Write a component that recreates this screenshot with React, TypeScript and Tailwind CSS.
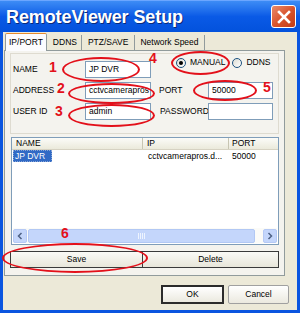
import React from 'react';

const font = { fontFamily: '"Liberation Sans", Arial, sans-serif' };

const Field: React.FC<{ value?: string; w: string }> = ({ value = '', w }) => (
  <div className={`${w} h-[17px] bg-white border border-[#7f9db9] flex items-center pl-[3px] text-[8.5px] text-black overflow-hidden whitespace-nowrap`}>
    {value}
  </div>
);

const Radio: React.FC<{ checked?: boolean; label: string }> = ({ checked, label }) => (
  <div className="flex items-center gap-[4px]">
    <div className="w-[10px] h-[10px] rounded-full border border-[#1c5180] bg-gradient-to-br from-[#dcdcd4] to-white flex items-center justify-center shrink-0">
      {checked && <div className="w-[4px] h-[4px] rounded-full bg-black" />}
    </div>
    <span className="text-[8.5px] text-black whitespace-nowrap">{label}</span>
  </div>
);

const Oval: React.FC<{ className: string }> = ({ className }) => (
  <div className={`absolute rounded-[50%] border-2 border-[#e3101a] pointer-events-none ${className}`} />
);

const Num: React.FC<{ n: string; className: string }> = ({ n, className }) => (
  <span className={`absolute text-[14px] font-bold text-[#e3101a] leading-none ${className}`}>{n}</span>
);

export default function App() {
  return (
    <div className="relative w-[300px] h-[313px] bg-[#0a55e0] flex flex-col overflow-hidden" style={font}>
      {/* title bar */}
      <div className="h-[32px] shrink-0 flex items-start justify-between bg-gradient-to-b from-[#3d8cf5] via-[#0a5ae6] to-[#0352dc] border-t border-[#6ba6ff]">
        <span className="ml-[6px] mt-[7px] text-[18px] font-bold text-white leading-none tracking-[-0.1px]" style={{ textShadow: '1px 1px 0 #0a2a7a' }}>
          RemoteViewer Setup
        </span>
        <div className="mt-[4px] mr-[4px] w-[25px] h-[23px] rounded-[3px] border border-white bg-gradient-to-br from-[#e88a6a] via-[#d9542d] to-[#c23b16] flex items-center justify-center">
          <svg width="14" height="14" viewBox="0 0 14 14">
            <path d="M2 2 L12 12 M12 2 L2 12" stroke="white" strokeWidth="2.6" strokeLinecap="square" />
          </svg>
        </div>
      </div>

      {/* body */}
      <div className="flex-1 mx-[3px] mb-[3px] bg-[#ece9d8] flex flex-col">
        {/* tabs */}
        <div className="h-[18px] flex items-end pl-[2px] text-[8.5px] text-black">
          <div className="h-[18px] px-[3px] flex items-center bg-[#fcfcfe] border border-b-0 border-[#919b9c] border-t-[#e68b2c] rounded-t-[2px] -mb-px z-10">
            IP/PORT
          </div>
          <div className="h-[15px] px-[4px] flex items-center border-r border-[#919b9c] ml-[2px]">DDNS</div>
          <div className="h-[15px] px-[6px] flex items-center border-r border-[#919b9c]">PTZ/SAVE</div>
          <div className="h-[15px] px-[5px] flex items-center border-r border-[#919b9c]">Network Speed</div>
        </div>

        {/* tab panel */}
        <div className="ml-[1px] w-[281px] h-[226px] border border-[#919b9c] bg-[#f4f3ee] flex flex-col px-[5px] pt-[2px]">
          {/* form area */}
          <div className="h-[81px] border border-[#dedbd0] flex flex-col pt-[7px] pl-[2px] gap-[4px]">
            <div className="flex items-center h-[17px]">
              <span className="w-[72px] text-[8.5px] text-black">NAME</span>
              <Field value="JP DVR" w="w-[66px]" />
              <div className="ml-[25px] -mt-[14px] flex items-center gap-[7px]">
                <Radio checked label="MANUAL" />
                <Radio label="DDNS" />
              </div>
            </div>
            <div className="flex items-center h-[17px]">
              <span className="w-[72px] text-[8.5px] text-black whitespace-nowrap">ADDRESS</span>
              <Field value="cctvcamerapros" w="w-[66px]" />
              <span className="ml-[8px] w-[49px] text-[8.5px] text-black">PORT</span>
              <Field value="50000" w="w-[65px]" />
            </div>
            <div className="flex items-center h-[17px]">
              <span className="w-[72px] text-[8.5px] text-black">USER ID</span>
              <Field value="admin" w="w-[66px]" />
              <span className="ml-[9px] w-[48px] text-[8.5px] text-black whitespace-nowrap">PASSWORD</span>
              <Field w="w-[65px]" />
            </div>
          </div>

          {/* list view */}
          <div className="mt-[3px] ml-[1px] w-[268px] h-[108px] border border-[#7f9db9] bg-white flex flex-col text-[8.5px] text-black">
            <div className="h-[12px] flex bg-gradient-to-b from-[#fbfbf8] to-[#ebeadb] border-b border-[#d6d2c2]">
              <div className="w-[131px] pl-[4px] border-r border-[#c7c5b2] flex items-center">NAME</div>
              <div className="w-[86px] pl-[4px] border-r border-[#c7c5b2] flex items-center">IP</div>
              <div className="flex-1 pl-[3px] flex items-center">PORT</div>
            </div>
            <div className="h-[10px] mt-[1px] flex items-center">
              <div className="w-[131px] pl-[1px]">
                <span className="bg-[#316ac5] text-white px-[1px] pr-[6px] border border-dotted border-[#8aa6d6]">JP DVR</span>
              </div>
              <div className="w-[86px] pl-[5px]">cctvcamerapros.d...</div>
              <div className="flex-1 pl-[3px]">50000</div>
            </div>
            <div className="flex-1" />
            {/* scrollbar */}
            <div className="h-[15px] mx-[1px] mb-[1px] flex items-center bg-[#fbfbf8] gap-px">
              <div className="w-[14px] h-[14px] rounded-[2px] bg-[#c4d6fb] border border-[#b5c9f5] flex items-center justify-center">
                <svg width="6" height="8" viewBox="0 0 6 8"><path d="M4.5 1 L1.5 4 L4.5 7" stroke="#4d6185" strokeWidth="1.5" fill="none" /></svg>
              </div>
              <div className="w-[227px] h-[14px] rounded-[2px] bg-[#c4d6fb] border border-[#b2c8f4] flex items-center justify-center">
                <div className="flex gap-px">
                  <div className="w-px h-[6px] bg-[#eef4fe]" />
                  <div className="w-px h-[6px] bg-[#eef4fe]" />
                  <div className="w-px h-[6px] bg-[#eef4fe]" />
                  <div className="w-px h-[6px] bg-[#eef4fe]" />
                </div>
              </div>
              <div className="flex-1" />
              <div className="w-[14px] h-[14px] rounded-[2px] bg-[#c4d6fb] border border-[#b5c9f5] flex items-center justify-center">
                <svg width="6" height="8" viewBox="0 0 6 8"><path d="M1.5 1 L4.5 4 L1.5 7" stroke="#4d6185" strokeWidth="1.5" fill="none" /></svg>
              </div>
            </div>
          </div>

          {/* save / delete */}
          <div className="mt-[6px] flex text-[8.5px] text-black">
            <button className="w-[133px] h-[17px] border border-[#3a3a3a] bg-gradient-to-b from-[#fafaf6] to-[#e8e6da]">Save</button>
            <button className="w-[136px] h-[17px] border border-l-0 border-[#3a3a3a] bg-gradient-to-b from-[#fafaf6] to-[#e8e6da]">Delete</button>
          </div>
        </div>

        {/* OK / Cancel */}
        <div className="mt-[9px] flex justify-end gap-[4px] pr-[8px] text-[8.5px] text-black">
          <button className="w-[63px] h-[19px] border-2 border-[#2b2b2b] bg-gradient-to-b from-white to-[#ebe9df]">OK</button>
          <button className="w-[61px] h-[19px] border border-[#a0a0a0] rounded-[2px] bg-gradient-to-b from-white to-[#ebe9df]">Cancel</button>
        </div>
      </div>

      {/* annotations */}
      <Oval className="left-[62px] top-[57px] w-[78px] h-[25px]" />
      <Oval className="left-[68px] top-[83px] w-[87px] h-[21px]" />
      <Oval className="left-[68px] top-[104px] w-[87px] h-[23px]" />
      <Oval className="left-[171px] top-[51px] w-[59px] h-[24px]" />
      <Oval className="left-[193px] top-[80px] w-[64px] h-[21px]" />
      <Oval className="left-[2px] top-[243px] w-[146px] h-[30px]" />
      <Num n="1" className="left-[49px] top-[60px]" />
      <Num n="2" className="left-[57px] top-[81px]" />
      <Num n="3" className="left-[55px] top-[104px]" />
      <Num n="4" className="left-[149px] top-[51px]" />
      <Num n="5" className="left-[263px] top-[80px]" />
      <Num n="6" className="left-[61px] top-[226px]" />
    </div>
  );
}
